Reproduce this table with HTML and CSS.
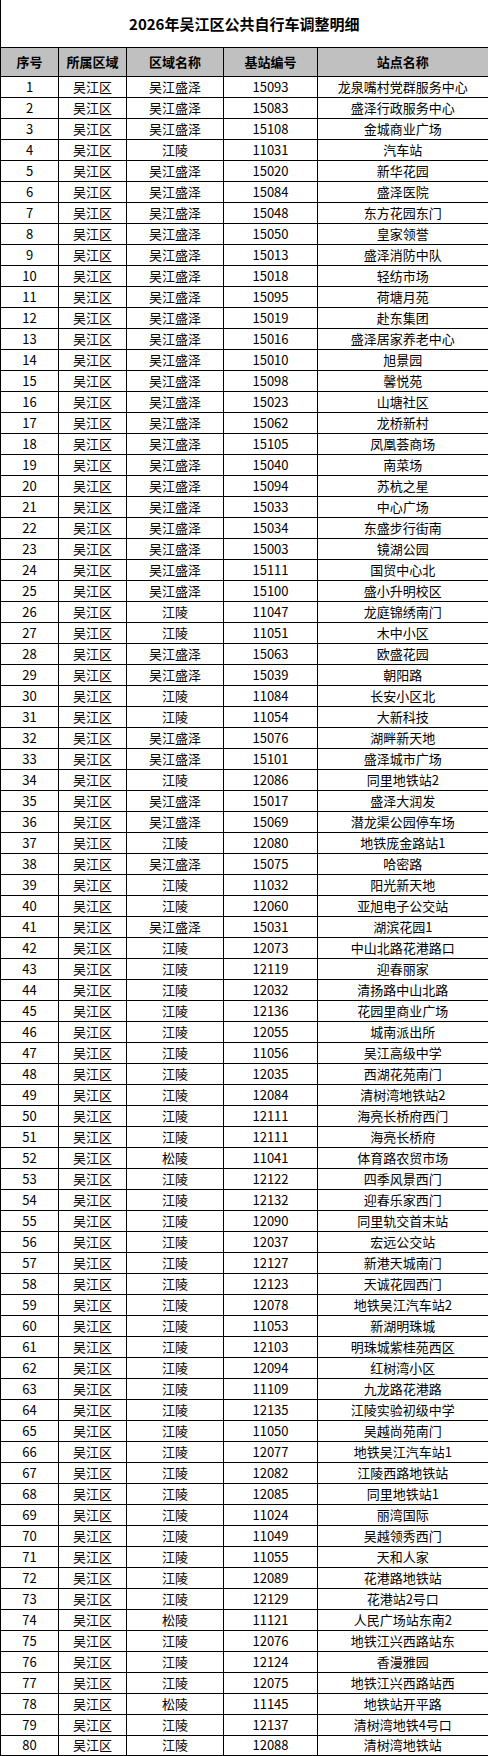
FILE: index.html
```html
<!DOCTYPE html>
<html lang="zh-CN">
<head>
<meta charset="utf-8">
<title>2026年吴江区公共自行车调整明细</title>
<link rel="stylesheet" href="styles.css">
</head>
<body>
<table class="sheet">
<colgroup>
<col class="c1"><col class="c2"><col class="c3"><col class="c4"><col class="c5">
</colgroup>
<thead>
<tr class="title-row"><th colspan="5" class="title">2026年吴江区公共自行车调整明细</th></tr>
<tr class="head-row"><th>序号</th><th>所属区域</th><th>区域名称</th><th>基站编号</th><th>站点名称</th></tr>
</thead>
<tbody>
<tr><td>1</td><td>吴江区</td><td>吴江盛泽</td><td>15093</td><td>龙泉嘴村党群服务中心</td></tr>
<tr><td>2</td><td>吴江区</td><td>吴江盛泽</td><td>15083</td><td>盛泽行政服务中心</td></tr>
<tr><td>3</td><td>吴江区</td><td>吴江盛泽</td><td>15108</td><td>金城商业广场</td></tr>
<tr><td>4</td><td>吴江区</td><td>江陵</td><td>11031</td><td>汽车站</td></tr>
<tr><td>5</td><td>吴江区</td><td>吴江盛泽</td><td>15020</td><td>新华花园</td></tr>
<tr><td>6</td><td>吴江区</td><td>吴江盛泽</td><td>15084</td><td>盛泽医院</td></tr>
<tr><td>7</td><td>吴江区</td><td>吴江盛泽</td><td>15048</td><td>东方花园东门</td></tr>
<tr><td>8</td><td>吴江区</td><td>吴江盛泽</td><td>15050</td><td>皇家领誉</td></tr>
<tr><td>9</td><td>吴江区</td><td>吴江盛泽</td><td>15013</td><td>盛泽消防中队</td></tr>
<tr><td>10</td><td>吴江区</td><td>吴江盛泽</td><td>15018</td><td>轻纺市场</td></tr>
<tr><td>11</td><td>吴江区</td><td>吴江盛泽</td><td>15095</td><td>荷塘月苑</td></tr>
<tr><td>12</td><td>吴江区</td><td>吴江盛泽</td><td>15019</td><td>赴东集团</td></tr>
<tr><td>13</td><td>吴江区</td><td>吴江盛泽</td><td>15016</td><td>盛泽居家养老中心</td></tr>
<tr><td>14</td><td>吴江区</td><td>吴江盛泽</td><td>15010</td><td>旭景园</td></tr>
<tr><td>15</td><td>吴江区</td><td>吴江盛泽</td><td>15098</td><td>馨悦苑</td></tr>
<tr><td>16</td><td>吴江区</td><td>吴江盛泽</td><td>15023</td><td>山塘社区</td></tr>
<tr><td>17</td><td>吴江区</td><td>吴江盛泽</td><td>15062</td><td>龙桥新村</td></tr>
<tr><td>18</td><td>吴江区</td><td>吴江盛泽</td><td>15105</td><td>凤凰荟商场</td></tr>
<tr><td>19</td><td>吴江区</td><td>吴江盛泽</td><td>15040</td><td>南菜场</td></tr>
<tr><td>20</td><td>吴江区</td><td>吴江盛泽</td><td>15094</td><td>苏杭之星</td></tr>
<tr><td>21</td><td>吴江区</td><td>吴江盛泽</td><td>15033</td><td>中心广场</td></tr>
<tr><td>22</td><td>吴江区</td><td>吴江盛泽</td><td>15034</td><td>东盛步行街南</td></tr>
<tr><td>23</td><td>吴江区</td><td>吴江盛泽</td><td>15003</td><td>镜湖公园</td></tr>
<tr><td>24</td><td>吴江区</td><td>吴江盛泽</td><td>15111</td><td>国贸中心北</td></tr>
<tr><td>25</td><td>吴江区</td><td>吴江盛泽</td><td>15100</td><td>盛小升明校区</td></tr>
<tr><td>26</td><td>吴江区</td><td>江陵</td><td>11047</td><td>龙庭锦绣南门</td></tr>
<tr><td>27</td><td>吴江区</td><td>江陵</td><td>11051</td><td>木中小区</td></tr>
<tr><td>28</td><td>吴江区</td><td>吴江盛泽</td><td>15063</td><td>欧盛花园</td></tr>
<tr><td>29</td><td>吴江区</td><td>吴江盛泽</td><td>15039</td><td>朝阳路</td></tr>
<tr><td>30</td><td>吴江区</td><td>江陵</td><td>11084</td><td>长安小区北</td></tr>
<tr><td>31</td><td>吴江区</td><td>江陵</td><td>11054</td><td>大新科技</td></tr>
<tr><td>32</td><td>吴江区</td><td>吴江盛泽</td><td>15076</td><td>湖畔新天地</td></tr>
<tr><td>33</td><td>吴江区</td><td>吴江盛泽</td><td>15101</td><td>盛泽城市广场</td></tr>
<tr><td>34</td><td>吴江区</td><td>江陵</td><td>12086</td><td>同里地铁站2</td></tr>
<tr><td>35</td><td>吴江区</td><td>吴江盛泽</td><td>15017</td><td>盛泽大润发</td></tr>
<tr><td>36</td><td>吴江区</td><td>吴江盛泽</td><td>15069</td><td>潜龙渠公园停车场</td></tr>
<tr><td>37</td><td>吴江区</td><td>江陵</td><td>12080</td><td>地铁庞金路站1</td></tr>
<tr><td>38</td><td>吴江区</td><td>吴江盛泽</td><td>15075</td><td>哈密路</td></tr>
<tr><td>39</td><td>吴江区</td><td>江陵</td><td>11032</td><td>阳光新天地</td></tr>
<tr><td>40</td><td>吴江区</td><td>江陵</td><td>12060</td><td>亚旭电子公交站</td></tr>
<tr><td>41</td><td>吴江区</td><td>吴江盛泽</td><td>15031</td><td>湖滨花园1</td></tr>
<tr><td>42</td><td>吴江区</td><td>江陵</td><td>12073</td><td>中山北路花港路口</td></tr>
<tr><td>43</td><td>吴江区</td><td>江陵</td><td>12119</td><td>迎春丽家</td></tr>
<tr><td>44</td><td>吴江区</td><td>江陵</td><td>12032</td><td>清扬路中山北路</td></tr>
<tr><td>45</td><td>吴江区</td><td>江陵</td><td>12136</td><td>花园里商业广场</td></tr>
<tr><td>46</td><td>吴江区</td><td>江陵</td><td>12055</td><td>城南派出所</td></tr>
<tr><td>47</td><td>吴江区</td><td>江陵</td><td>11056</td><td>吴江高级中学</td></tr>
<tr><td>48</td><td>吴江区</td><td>江陵</td><td>12035</td><td>西湖花苑南门</td></tr>
<tr><td>49</td><td>吴江区</td><td>江陵</td><td>12084</td><td>清树湾地铁站2</td></tr>
<tr><td>50</td><td>吴江区</td><td>江陵</td><td>12111</td><td>海亮长桥府西门</td></tr>
<tr><td>51</td><td>吴江区</td><td>江陵</td><td>12111</td><td>海亮长桥府</td></tr>
<tr><td>52</td><td>吴江区</td><td>松陵</td><td>11041</td><td>体育路农贸市场</td></tr>
<tr><td>53</td><td>吴江区</td><td>江陵</td><td>12122</td><td>四季风景西门</td></tr>
<tr><td>54</td><td>吴江区</td><td>江陵</td><td>12132</td><td>迎春乐家西门</td></tr>
<tr><td>55</td><td>吴江区</td><td>江陵</td><td>12090</td><td>同里轨交首末站</td></tr>
<tr><td>56</td><td>吴江区</td><td>江陵</td><td>12037</td><td>宏远公交站</td></tr>
<tr><td>57</td><td>吴江区</td><td>江陵</td><td>12127</td><td>新港天城南门</td></tr>
<tr><td>58</td><td>吴江区</td><td>江陵</td><td>12123</td><td>天诚花园西门</td></tr>
<tr><td>59</td><td>吴江区</td><td>江陵</td><td>12078</td><td>地铁吴江汽车站2</td></tr>
<tr><td>60</td><td>吴江区</td><td>江陵</td><td>11053</td><td>新湖明珠城</td></tr>
<tr><td>61</td><td>吴江区</td><td>江陵</td><td>12103</td><td>明珠城紫桂苑西区</td></tr>
<tr><td>62</td><td>吴江区</td><td>江陵</td><td>12094</td><td>红树湾小区</td></tr>
<tr><td>63</td><td>吴江区</td><td>江陵</td><td>11109</td><td>九龙路花港路</td></tr>
<tr><td>64</td><td>吴江区</td><td>江陵</td><td>12135</td><td>江陵实验初级中学</td></tr>
<tr><td>65</td><td>吴江区</td><td>江陵</td><td>11050</td><td>吴越尚苑南门</td></tr>
<tr><td>66</td><td>吴江区</td><td>江陵</td><td>12077</td><td>地铁吴江汽车站1</td></tr>
<tr><td>67</td><td>吴江区</td><td>江陵</td><td>12082</td><td>江陵西路地铁站</td></tr>
<tr><td>68</td><td>吴江区</td><td>江陵</td><td>12085</td><td>同里地铁站1</td></tr>
<tr><td>69</td><td>吴江区</td><td>江陵</td><td>11024</td><td>丽湾国际</td></tr>
<tr><td>70</td><td>吴江区</td><td>江陵</td><td>11049</td><td>吴越领秀西门</td></tr>
<tr><td>71</td><td>吴江区</td><td>江陵</td><td>11055</td><td>天和人家</td></tr>
<tr><td>72</td><td>吴江区</td><td>江陵</td><td>12089</td><td>花港路地铁站</td></tr>
<tr><td>73</td><td>吴江区</td><td>江陵</td><td>12129</td><td>花港站2号口</td></tr>
<tr><td>74</td><td>吴江区</td><td>松陵</td><td>11121</td><td>人民广场站东南2</td></tr>
<tr><td>75</td><td>吴江区</td><td>江陵</td><td>12076</td><td>地铁江兴西路站东</td></tr>
<tr><td>76</td><td>吴江区</td><td>江陵</td><td>12124</td><td>香漫雅园</td></tr>
<tr><td>77</td><td>吴江区</td><td>江陵</td><td>12075</td><td>地铁江兴西路站西</td></tr>
<tr><td>78</td><td>吴江区</td><td>松陵</td><td>11145</td><td>地铁站开平路</td></tr>
<tr><td>79</td><td>吴江区</td><td>江陵</td><td>12137</td><td>清树湾地铁4号口</td></tr>
<tr><td>80</td><td>吴江区</td><td>江陵</td><td>12088</td><td>清树湾地铁站</td></tr>
</tbody>
</table>
</body>
</html>
```

FILE: styles.css
```css
html, body {
  margin: 0;
  padding: 0;
  background: #ffffff;
}

body {
  font-family: "Noto Sans CJK SC", "Noto Sans", sans-serif;
  color: #000000;
}

.sheet {
  border-collapse: collapse;
  table-layout: fixed;
  width: 488px;
  border-right: 2px solid #000;
  border-bottom: 2px solid #000;
}

.c1 { width: 58px; }
.c2 { width: 68px; }
.c3 { width: 97px; }
.c4 { width: 94px; }
.c5 { width: 171px; }

.sheet th,
.sheet td {
  border: 1px solid #000;
  padding: 0;
  text-align: center;
  vertical-align: middle;
  white-space: nowrap;
  overflow: hidden;
}

.title-row { height: 47px; }

.sheet .title {
  border-top: none;
  font-size: 15px;
  font-weight: 700;
  background: #ffffff;
}

.head-row { height: 29px; }

.head-row th {
  background: #c0c0c0;
  font-size: 13px;
  font-weight: 700;
}

.sheet tbody tr { height: 21px; }

.sheet td {
  font-size: 13px;
  font-weight: 400;
  line-height: 18px;
}
```
